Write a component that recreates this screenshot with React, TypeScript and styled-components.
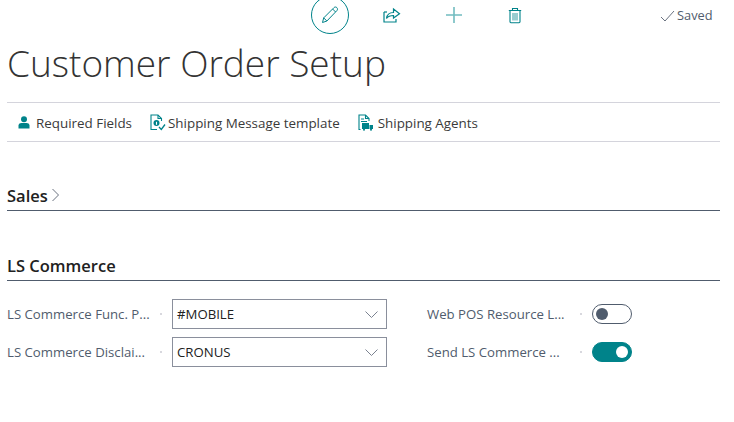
import * as React from "react";
import styled, { createGlobalStyle } from "styled-components";

const GlobalStyle = createGlobalStyle`
  html, body {
    margin: 0;
    padding: 0;
    background: #fff;
    overflow: hidden;
  }
  body {
    font-family: "Open Sans", "Noto Sans", sans-serif;
    color: #212121;
  }
`;

const TEAL = "#00838a";

const Page = styled.div`
  width: 734px;
  height: 422px;
  overflow: hidden;
  padding: 0 14px 0 7px;
  box-sizing: border-box;
`;

const TopBar = styled.div`
  height: 35px;
  display: flex;
  align-items: flex-start;
`;

const EditCircle = styled.button`
  width: 38px;
  height: 38px;
  margin: -4px 0 0 304px;
  padding: 0;
  border: 1px solid ${TEAL};
  border-radius: 50%;
  background: #fff;
  display: flex;
  align-items: center;
  justify-content: center;
`;

const TopIcon = styled.span<{ $left: number }>`
  margin: 5px 0 0 ${({ $left }) => $left}px;
  width: 20px;
  height: 20px;
  display: flex;
  align-items: center;
  justify-content: center;
`;

const Saved = styled.div`
  margin: 7px 0 0 135px;
  display: flex;
  align-items: center;
  gap: 2px;
  font-size: 12.8px;
  line-height: 17px;
  color: #505c6d;
`;

const Title = styled.h1`
  margin: 0;
  height: 67px;
  font-size: 37px;
  line-height: 56px;
  font-weight: 300;
  color: #333;
  white-space: nowrap;
`;

const ActionBar = styled.div`
  height: 38px;
  box-sizing: content-box;
  border-top: 1px solid #d4d4dc;
  border-bottom: 1px solid #d4d4dc;
  display: flex;
  align-items: center;
  padding-left: 11px;
  gap: 18px;
`;

const Action = styled.div`
  display: flex;
  align-items: center;
  gap: 2px;
  font-size: 13.4px;
  line-height: 20px;
  color: #3a3a3a;
  white-space: nowrap;
`;

const ActionText = styled.span<{ $indent?: number }>`
  margin-left: ${({ $indent }) => $indent ?? 0}px;
  padding-top: 2px;
`;

const Section = styled.section<{ $top: number }>`
  margin-top: ${({ $top }) => $top}px;
  height: 28px;
  box-sizing: border-box;
  padding-bottom: 3px;
  border-bottom: 1px solid #505c6d;
  display: flex;
  align-items: center;
  gap: 3px;
  font-size: 16.5px;
  font-weight: 600;
  color: #212121;
`;

const FieldGrid = styled.div`
  margin-top: 18px;
  display: grid;
  grid-template-columns: 380px 205px;
  row-gap: 8px;
  column-gap: 40px;
`;

const Field = styled.div`
  height: 30px;
  display: flex;
  align-items: center;
`;

const Label = styled.span`
  width: 153px;
  font-size: 13.2px;
  color: #505c6d;
  white-space: nowrap;
  flex: none;
`;

const Dot = styled.span`
  width: 2px;
  height: 2px;
  background: #d8d8de;
  flex: none;
  margin-right: 10px;
`;

const Select = styled.div`
  width: 215px;
  height: 30px;
  box-sizing: border-box;
  border: 1px solid #8a8f9c;
  display: flex;
  align-items: center;
  justify-content: space-between;
  padding: 0 8px 0 4px;
  font-size: 13.2px;
  color: #212121;
`;

const Toggle = styled.div<{ $on: boolean }>`
  width: 40px;
  height: 20px;
  box-sizing: border-box;
  border-radius: 10px;
  border: 1px solid ${({ $on }) => ($on ? TEAL : "#505c6d")};
  background: ${({ $on }) => ($on ? TEAL : "#fff")};
  display: flex;
  align-items: center;
  justify-content: ${({ $on }) => ($on ? "flex-end" : "flex-start")};
  padding: 0 3px;
`;

const Knob = styled.span<{ $on: boolean }>`
  width: 12px;
  height: 12px;
  border-radius: 50%;
  background: ${({ $on }) => ($on ? "#fff" : "#505c6d")};
`;

const Chevron = () => (
  <svg width="13" height="7" viewBox="0 0 13 7" fill="none" stroke="#7b8290" strokeWidth="1">
    <path d="M.5.5l6 6 6-6" />
  </svg>
);

const PencilIcon = () => (
  <svg width="18" height="18" viewBox="0 0 18 18" fill="none" stroke={TEAL} strokeWidth="1">
    <path d="M1.500 16.500l1.200-4.600L12.900 1.700c.9-.9 2.200-.9 3 0 .8.800.8 2.100 0 2.900L5.900 15z" />
    <path d="M11.600 3l3 3M2.700 11.900l3.200 3.100" />
  </svg>
);

const ShareIcon = () => (
  <svg width="18" height="16" viewBox="0 0 18 16" fill="none" stroke={TEAL} strokeWidth="1.200">
    <path d="M1 5v10h12v-3" />
    <path d="M1 5h3" />
    <path d="M3.500 11.500C4 7.500 7 5.500 10.500 5.500V2l6 4.700-6 4.300V8.500c-3 0-5.500.8-7 3z" />
  </svg>
);

const PlusIcon = () => (
  <svg width="18" height="18" viewBox="0 0 18 18" fill="none" stroke="#72bcc0" strokeWidth="1.600">
    <path d="M9 1v16M1 9h16" />
  </svg>
);

const TrashIcon = () => (
  <svg width="14" height="17" viewBox="0 0 14 17" fill="none" stroke={TEAL} strokeWidth="1.100">
    <path d="M.8 3.500h12.400M4.500 3.500V1.500h5v2" />
    <path d="M2 3.500v11.300c0 .5.400.9.900.9h8.200c.5 0 .9-.4.9-.9V3.500" />
    <path d="M5 6v7.500M7 6v7.500M9 6v7.500" strokeWidth="0.800" />
  </svg>
);

const CheckIcon = () => (
  <svg width="15" height="12" viewBox="0 0 15 12" fill="none" stroke="#6a7280" strokeWidth="1">
    <path d="M1 7l4 4 9-10" />
  </svg>
);

const PersonIcon = () => (
  <svg width="12" height="13" viewBox="0 0 12 13" fill={TEAL}>
    <circle cx="6" cy="3.200" r="3" />
    <path d="M.5 12.500V9.500C.5 7.800 2 7 3.500 7h5C10 7 11.500 7.800 11.500 9.500v3z" />
  </svg>
);

const DocInfoIcon = () => (
  <svg width="16" height="17" viewBox="0 0 16 17" fill="none" stroke={TEAL} strokeWidth="1.100">
    <path d="M7 15.500H1V1h7l3.500 3.500V7" />
    <path d="M8 1v3.500h3.500" />
    <circle cx="6.500" cy="9" r="3" fill={TEAL} stroke="none" />
    <path d="M6.500 7.800v3" stroke="#fff" />
    <path d="M9 13l2.300 2.500L15 10.500" strokeWidth="1.300" />
  </svg>
);

const ShipIcon = () => (
  <svg width="16" height="17" viewBox="0 0 16 17" fill="none" stroke={TEAL} strokeWidth="1.100">
    <path d="M2.500 15.500H1V1h6.500L11 4.500V7" />
    <path d="M7.500 1v3.500H11M3 5h3M3 7.500h6" />
    <rect x="4" y="9" width="7" height="6" fill={TEAL} stroke="none" />
    <path d="M11.500 11H15v4h-3.500z" fill={TEAL} stroke="none" />
    <circle cx="6" cy="15.700" r="1" fill={TEAL} stroke="none" />
    <circle cx="13" cy="15.700" r="1" fill={TEAL} stroke="none" />
  </svg>
);

const SectionChevron = () => (
  <svg width="9" height="14" viewBox="0 0 9 14" fill="none" stroke="#6a7280" strokeWidth="1">
    <path d="M1.500 1l6 6-6 6" />
  </svg>
);

const App: React.FC = () => (
  <Page>
    <GlobalStyle />
    <TopBar>
      <EditCircle>
        <PencilIcon />
      </EditCircle>
      <TopIcon $left={33}>
        <ShareIcon />
      </TopIcon>
      <TopIcon $left={42}>
        <PlusIcon />
      </TopIcon>
      <TopIcon $left={41}>
        <TrashIcon />
      </TopIcon>
      <Saved>
        <CheckIcon />
        Saved
      </Saved>
    </TopBar>
    <Title>Customer Order Setup</Title>
    <ActionBar>
      <Action>
        <PersonIcon />
        <ActionText $indent={4}>Required Fields</ActionText>
      </Action>
      <Action>
        <DocInfoIcon />
        <ActionText>Shipping Message template</ActionText>
      </Action>
      <Action>
        <ShipIcon />
        <ActionText $indent={2}>Shipping Agents</ActionText>
      </Action>
    </ActionBar>
    <Section $top={41}>
      Sales
      <SectionChevron />
    </Section>
    <Section $top={42}>LS Commerce</Section>
    <FieldGrid>
      <Field>
        <Label>LS Commerce Func. P...</Label>
        <Dot />
        <Select>
          #MOBILE
          <Chevron />
        </Select>
      </Field>
      <Field>
        <Label>Web POS Resource L...</Label>
        <Dot />
        <Toggle $on={false}>
          <Knob $on={false} />
        </Toggle>
      </Field>
      <Field>
        <Label>LS Commerce Disclai...</Label>
        <Dot />
        <Select>
          CRONUS
          <Chevron />
        </Select>
      </Field>
      <Field>
        <Label>Send LS Commerce ...</Label>
        <Dot />
        <Toggle $on={true}>
          <Knob $on={true} />
        </Toggle>
      </Field>
    </FieldGrid>
  </Page>
);

export default App;
